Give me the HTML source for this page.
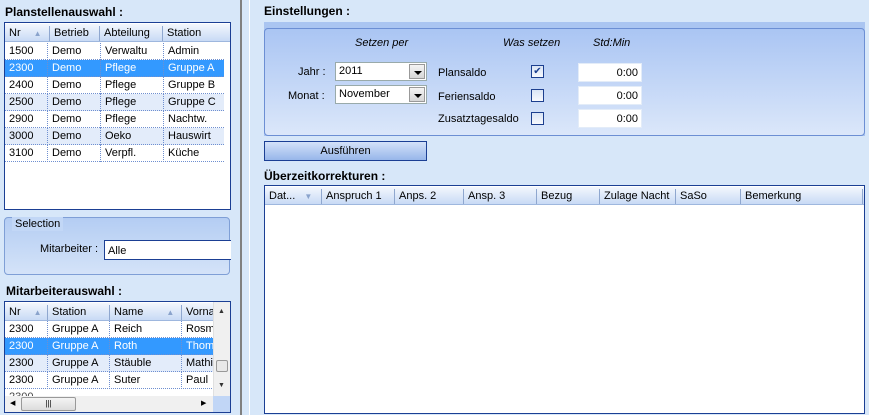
<!DOCTYPE html>
<html><head><meta charset="utf-8"><style>
*{box-sizing:border-box;margin:0;padding:0}
body{width:869px;height:415px;background:#d7e7f9;font-family:"Liberation Sans",sans-serif;font-size:11px;color:#000;position:relative;overflow:hidden}
.a{position:absolute}
.lbl{font-weight:bold;font-size:12px}
.grid{position:absolute;border:1px solid #1b3f94;background:#fff;overflow:hidden}
.hdr{position:absolute;left:0;right:0;top:1px;height:18px;background:linear-gradient(#f3f7fd,#c8daf5);border-bottom:1px solid #9eb7de}
.hc{position:absolute;top:2px;height:15px;line-height:15px;padding-left:4px;border-left:1px solid #8fa7cf}
.row{position:absolute;left:0;height:17px;line-height:16px;border-bottom:1px dotted #6f8fd0}
.row span{position:absolute;top:0;padding-left:4px;border-left:1px dotted #6f8fd0;height:17px}
.row span:first-child{border-left:none}
.sel{background:#3399ff;color:#fff}
.alt{background:#e3ecfa}
.inp{position:absolute;background:#fff;border:1px solid #e3ecf8}
.cb{position:absolute;width:13px;height:13px;border:1px solid #1c3f8f;background:linear-gradient(#d9e4f5,#f7f9fd)}
.dd{position:absolute;right:1px;top:1px;bottom:1px;width:16px;background:linear-gradient(#f4f4f4,#d6d6d6);border:1px solid #999}
.dd:after{content:"";position:absolute;left:4px;top:6px;border:4px solid transparent;border-top:4px solid #000}
</style></head><body>
<div class="a" style="left:240px;top:0;width:2px;height:415px;background:#808080"></div>
<div class="a" style="left:249px;top:0;width:1px;height:415px;background:#fff"></div>

<div class="a lbl" style="left:5px;top:5px">Planstellenauswahl :</div>
<div class="grid" style="left:4px;top:22px;width:227px;height:188px">
 <div class="hdr">
  <div class="hc" style="left:0;border-left:none;width:42px">Nr <span style="color:#8aa3cc;font-size:8px;margin-left:10px">▲</span></div>
  <div class="hc" style="left:44px">Betrieb</div>
  <div class="hc" style="left:94px">Abteilung</div>
  <div class="hc" style="left:157px">Station</div>
 </div>
 <div class="row" style="top:20px;width:219px"><span style="left:0">1500</span><span style="left:42px">Demo</span><span style="left:95px">Verwaltu</span><span style="left:158px">Admin</span></div>
 <div class="row sel" style="top:37px;width:219px"><span style="left:0">2300</span><span style="left:42px">Demo</span><span style="left:95px">Pflege</span><span style="left:158px">Gruppe A</span></div>
 <div class="row" style="top:54px;width:219px"><span style="left:0">2400</span><span style="left:42px">Demo</span><span style="left:95px">Pflege</span><span style="left:158px">Gruppe B</span></div>
 <div class="row alt" style="top:71px;width:219px"><span style="left:0">2500</span><span style="left:42px">Demo</span><span style="left:95px">Pflege</span><span style="left:158px">Gruppe C</span></div>
 <div class="row" style="top:88px;width:219px"><span style="left:0">2900</span><span style="left:42px">Demo</span><span style="left:95px">Pflege</span><span style="left:158px">Nachtw.</span></div>
 <div class="row alt" style="top:105px;width:219px"><span style="left:0">3000</span><span style="left:42px">Demo</span><span style="left:95px">Oeko</span><span style="left:158px">Hauswirt</span></div>
 <div class="row" style="top:122px;width:219px"><span style="left:0">3100</span><span style="left:42px">Demo</span><span style="left:95px">Verpfl.</span><span style="left:158px">Küche</span></div>
</div>

<div class="a" style="left:4px;top:217px;width:226px;height:58px;border:1px solid #7f9fd6;border-radius:4px;background:linear-gradient(#b4cdf3,#d4e3f8)"></div>
<div class="a" style="left:12px;top:217px;padding:0 3px;background:#c2d7f6;line-height:14px">Selection</div>
<div class="a" style="left:40px;top:243px">Mitarbeiter :</div>
<div class="inp" style="left:104px;top:240px;width:127px;height:20px;border:1px solid #1b3f94;border-right:none;padding:4px 3px">Alle</div>

<div class="a lbl" style="left:6px;top:284px">Mitarbeiterauswahl :</div>
<div class="grid" style="left:4px;top:301px;width:227px;height:112px">
 <div class="hdr" style="right:17px">
  <div class="hc" style="left:0;border-left:none">Nr <span style="color:#8aa3cc;font-size:8px;margin-left:10px">▲</span></div>
  <div class="hc" style="left:42px">Station</div>
  <div class="hc" style="left:104px">Name <span style="color:#8aa3cc;font-size:8px;margin-left:20px">▲</span></div>
  <div class="hc" style="left:176px">Vorna</div>
 </div>
 <div class="row" style="top:19px;width:209px"><span style="left:0">2300</span><span style="left:42px">Gruppe A</span><span style="left:104px">Reich</span><span style="left:176px">Rosma</span></div>
 <div class="row sel" style="top:36px;width:209px"><span style="left:0">2300</span><span style="left:42px">Gruppe A</span><span style="left:104px">Roth</span><span style="left:176px">Thoma</span></div>
 <div class="row alt" style="top:53px;width:209px"><span style="left:0">2300</span><span style="left:42px">Gruppe A</span><span style="left:104px">Stäuble</span><span style="left:176px">Mathil</span></div>
 <div class="row" style="top:70px;width:209px"><span style="left:0">2300</span><span style="left:42px">Gruppe A</span><span style="left:104px">Suter</span><span style="left:176px">Paul</span></div>
 <div class="row" style="top:87px;width:209px;color:#444"><span style="left:0">2300</span></div>
 <div class="a" style="left:208px;top:0;width:17px;height:94px;background:#f0f0f0;border-left:1px solid #e0e0e0">
  <div class="a" style="left:4px;top:6px;font-size:7px;color:#333">▲</div>
  <div class="a" style="left:2px;top:58px;width:12px;height:12px;border:1px solid #999;background:#e8e8e8;border-radius:2px"></div>
  <div class="a" style="left:4px;top:80px;font-size:7px;color:#333">▼</div>
 </div>
 <div class="a" style="left:0;top:94px;width:208px;height:16px;background:#f0f0f0">
  <div class="a" style="left:5px;top:3px;font-size:7px">◀</div>
  <div class="a" style="left:16px;top:1px;width:55px;height:14px;border:1px solid #999;background:linear-gradient(#f4f4f4,#dcdcdc);border-radius:2px;text-align:center;font-size:8px;line-height:12px">|||</div>
  <div class="a" style="left:196px;top:3px;font-size:7px">▶</div>
 </div>
 <div class="a" style="left:208px;top:94px;width:17px;height:16px;background:#c1d6f6"></div>
</div>

<div class="a lbl" style="left:264px;top:4px">Einstellungen :</div>
<div class="a" style="left:264px;top:22px;width:601px;height:114px;background:#aac5f1"></div>
<div class="a" style="left:264px;top:28px;width:601px;height:108px;border:1px solid #6c8fd4;border-radius:4px;background:linear-gradient(#aac5f3,#dbe7fa)"></div>
<div class="a" style="left:355px;top:37px;font-style:italic">Setzen per</div>
<div class="a" style="left:503px;top:37px;font-style:italic">Was setzen</div>
<div class="a" style="left:593px;top:37px;font-style:italic">Std:Min</div>
<div class="a" style="left:298px;top:66px">Jahr :</div>
<div class="a" style="left:288px;top:90px">Monat :</div>
<div class="inp" style="left:335px;top:62px;width:92px;height:19px;border:1px solid #9aa;padding:2px 3px">2011<div class="dd"></div></div>
<div class="inp" style="left:335px;top:85px;width:92px;height:19px;border:1px solid #9aa;padding:2px 3px">November<div class="dd"></div></div>
<div class="a" style="left:438px;top:67px">Plansaldo</div>
<div class="a" style="left:438px;top:91px">Feriensaldo</div>
<div class="a" style="left:438px;top:113px">Zusatztagesaldo</div>
<div class="cb" style="left:531px;top:65px;font-size:10px;line-height:11px;text-align:center;color:#1c3f8f">✔</div>
<div class="cb" style="left:531px;top:89px"></div>
<div class="cb" style="left:531px;top:112px"></div>
<div class="inp" style="left:578px;top:63px;width:64px;height:19px;text-align:right;padding:3px 3px">0:00</div>
<div class="inp" style="left:578px;top:86px;width:64px;height:19px;text-align:right;padding:3px 3px">0:00</div>
<div class="inp" style="left:578px;top:109px;width:64px;height:19px;text-align:right;padding:3px 3px">0:00</div>

<div class="a" style="left:264px;top:141px;width:163px;height:20px;border:1px solid #1b3f94;background:linear-gradient(#d4e2f9,#97b6ea);text-align:center;line-height:18px">Ausführen</div>

<div class="a lbl" style="left:264px;top:169px">Überzeitkorrekturen :</div>
<div class="grid" style="left:264px;top:185px;width:601px;height:229px">
 <div class="hdr">
  <div class="hc" style="left:0;border-left:none">Dat... <span style="color:#8aa3cc;font-size:8px;margin-left:6px">▼</span></div>
  <div class="hc" style="left:56px">Anspruch 1</div>
  <div class="hc" style="left:129px">Anps. 2</div>
  <div class="hc" style="left:198px">Ansp. 3</div>
  <div class="hc" style="left:271px">Bezug</div>
  <div class="hc" style="left:334px">Zulage Nacht</div>
  <div class="hc" style="left:410px">SaSo</div>
  <div class="hc" style="left:475px">Bemerkung</div>
  <div class="hc" style="left:597px"></div>
 </div>
</div>
</body></html>
